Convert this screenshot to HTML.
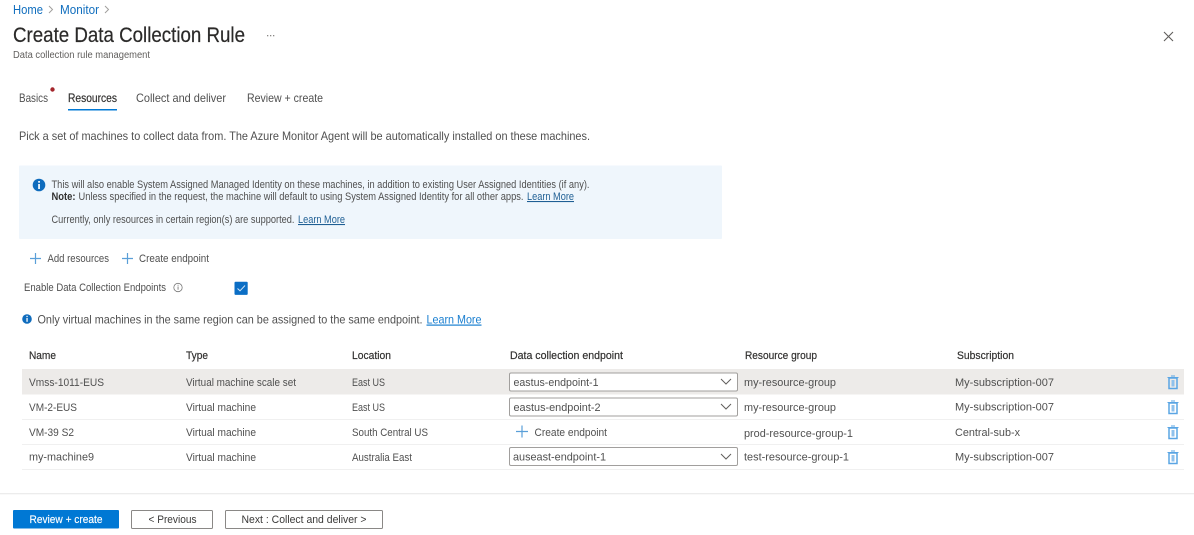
<!DOCTYPE html>
<html><head><meta charset="utf-8"><title>Create Data Collection Rule</title>
<style>
html,body{margin:0;padding:0;background:#fff;width:1194px;height:535px;overflow:hidden}
svg{display:block;font-family:"Liberation Sans",sans-serif;filter:blur(.3px)}
text{fill:#505050;font-size:12px}
.d{fill:#3b3a39}
.h{fill:#323130;stroke:#323130;stroke-width:.2px}
.l{fill:#106ebe}
.s{font-size:10.8px}
.m{font-size:11.4px}
.plus{stroke:#5a9fd8;stroke-width:1.2;fill:none}
.sel{fill:#fff;stroke:#a19f9d;stroke-width:1}
.chev{fill:none;stroke:#605e5c;stroke-width:1}
.tr{fill:none;stroke:#5aa5e4;stroke-width:1.5}
.line{stroke:#f0f0f0;stroke-width:1}
</style></head><body>
<svg width="1194" height="535" viewBox="0 0 1194 535" xmlns="http://www.w3.org/2000/svg">
<!-- breadcrumb -->
<text x="13" y="14" class="l" style="font-size:12.500px" textLength="30" lengthAdjust="spacingAndGlyphs">Home</text>
<path d="M49 6l3.500 3.500L49 13" fill="none" stroke="#a19f9d"/>
<text x="60" y="14" class="l" style="font-size:12.500px" textLength="39" lengthAdjust="spacingAndGlyphs">Monitor</text>
<path d="M105 6l3.500 3.500L105 13" fill="none" stroke="#a19f9d"/>
<!-- title -->
<text x="13" y="42" style="font-size:21px;fill:#2b2a29;stroke:#2b2a29;stroke-width:.2px" textLength="232" lengthAdjust="spacingAndGlyphs">Create Data Collection Rule</text>
<g fill="#8a8886"><rect x="267" y="35" width="1.300" height="1.300"/><rect x="270" y="35" width="1.300" height="1.300"/><rect x="273" y="35" width="1.300" height="1.300"/></g>
<text x="13" y="58" style="font-size:10px;fill:#605e5c" textLength="137" lengthAdjust="spacingAndGlyphs">Data collection rule management</text>
<path d="M1164 32l9 9M1173 32l-9 9" stroke="#605e5c" stroke-width="1.100" fill="none"/>
<!-- tabs -->
<text x="19" y="102" textLength="29" lengthAdjust="spacingAndGlyphs">Basics</text>
<circle cx="52.500" cy="89.500" r="2.200" fill="#a4262c"/>
<text x="68" y="102" class="h" textLength="49" lengthAdjust="spacingAndGlyphs">Resources</text>
<rect x="68" y="109" width="49" height="1.500" fill="#0078d4"/>
<text x="136" y="102" textLength="90" lengthAdjust="spacingAndGlyphs">Collect and deliver</text>
<text x="247" y="102" textLength="76" lengthAdjust="spacingAndGlyphs">Review + create</text>
<text x="19" y="140" textLength="571" lengthAdjust="spacingAndGlyphs">Pick a set of machines to collect data from. The Azure Monitor Agent will be automatically installed on these machines.</text>
<!-- info box -->
<rect x="19" y="165.500" width="703" height="73.500" rx="1" fill="#eff6fc"/>
<circle cx="39" cy="185" r="6.300" fill="#0f6cbd"/>
<rect x="38.200" y="184" width="1.700" height="5" fill="#fff"/><rect x="38.200" y="181" width="1.700" height="1.700" fill="#fff"/>
<text x="51.500" y="188" class="s" textLength="538" lengthAdjust="spacingAndGlyphs">This will also enable System Assigned Managed Identity on these machines, in addition to existing User Assigned Identities (if any).</text>
<text x="51.500" y="200" class="s" style="font-weight:bold;fill:#323130" textLength="24" lengthAdjust="spacingAndGlyphs">Note:</text>
<text x="78.500" y="200" class="s" textLength="445" lengthAdjust="spacingAndGlyphs">Unless specified in the request, the machine will default to using System Assigned Identity for all other apps.</text>
<text x="527" y="200" class="s" style="fill:#1f5f94" text-decoration="underline" textLength="47" lengthAdjust="spacingAndGlyphs">Learn More</text>
<text x="51.500" y="223" class="s" textLength="243" lengthAdjust="spacingAndGlyphs">Currently, only resources in certain region(s) are supported.</text>
<text x="298" y="223" class="s" style="fill:#1f5f94" text-decoration="underline" textLength="47" lengthAdjust="spacingAndGlyphs">Learn More</text>
<!-- toolbar -->
<path class="plus" d="M30 258.500h11M35.500 253v11M122 258.500h11M127.500 253v11"/>
<text x="47.500" y="262" class="m" textLength="61.500" lengthAdjust="spacingAndGlyphs">Add resources</text>
<text x="139" y="262" class="m" textLength="70" lengthAdjust="spacingAndGlyphs">Create endpoint</text>
<text x="24" y="291" class="m" textLength="142" lengthAdjust="spacingAndGlyphs">Enable Data Collection Endpoints</text>
<circle cx="178" cy="287.500" r="4.200" fill="none" stroke="#7a7a7a" stroke-width=".8"/>
<rect x="177.600" y="286.500" width=".9" height="3.200" fill="#7a7a7a"/><rect x="177.600" y="284.800" width=".9" height=".9" fill="#7a7a7a"/>
<rect x="234.500" y="281.700" width="13.200" height="13.200" rx="1" fill="#0b6ec5"/>
<path d="M237.500 288.500l2.500 2.300 5-5.300" fill="none" stroke="#cfe4f7" stroke-width="1"/>
<circle cx="27" cy="319" r="4.800" fill="#0f6cbd"/>
<rect x="26.400" y="318" width="1.300" height="3.800" fill="#fff"/><rect x="26.400" y="315.800" width="1.300" height="1.300" fill="#fff"/>
<text x="37.500" y="323.500" textLength="385" lengthAdjust="spacingAndGlyphs">Only virtual machines in the same region can be assigned to the same endpoint.</text>
<text x="426.500" y="323.500" style="fill:#1a7fd0" text-decoration="underline" textLength="55" lengthAdjust="spacingAndGlyphs">Learn More</text>
<!-- table header -->
<text x="29" y="359" class="h m" textLength="27" lengthAdjust="spacingAndGlyphs">Name</text>
<text x="186" y="359" class="h m" textLength="22" lengthAdjust="spacingAndGlyphs">Type</text>
<text x="352" y="359" class="h m" textLength="39" lengthAdjust="spacingAndGlyphs">Location</text>
<text x="510" y="359" class="h m" textLength="113" lengthAdjust="spacingAndGlyphs">Data collection endpoint</text>
<text x="745" y="359" class="h m" textLength="72" lengthAdjust="spacingAndGlyphs">Resource group</text>
<text x="957" y="359" class="h m" textLength="57" lengthAdjust="spacingAndGlyphs">Subscription</text>
<rect x="22" y="369" width="1162" height="25.500" fill="#edebe9"/>
<path class="line" d="M22 419.500h1162M22 444.500h1162M22 469.500h1162"/>
<!-- rows -->
<text x="29" y="386" class="m" textLength="75" lengthAdjust="spacingAndGlyphs">Vmss-1011-EUS</text>
<text x="186" y="386" class="m" textLength="110" lengthAdjust="spacingAndGlyphs">Virtual machine scale set</text>
<text x="352" y="386" class="m" textLength="33" lengthAdjust="spacingAndGlyphs">East US</text>
<text x="744" y="386" class="m" textLength="92" lengthAdjust="spacingAndGlyphs">my-resource-group</text>
<text x="955" y="386" class="m" textLength="99" lengthAdjust="spacingAndGlyphs">My-subscription-007</text>

<text x="29" y="411" class="m" textLength="48" lengthAdjust="spacingAndGlyphs">VM-2-EUS</text>
<text x="186" y="411" class="m" textLength="70" lengthAdjust="spacingAndGlyphs">Virtual machine</text>
<text x="352" y="411" class="m" textLength="33" lengthAdjust="spacingAndGlyphs">East US</text>
<text x="744" y="411" class="m" textLength="92" lengthAdjust="spacingAndGlyphs">my-resource-group</text>
<text x="955" y="410.500" class="m" textLength="99" lengthAdjust="spacingAndGlyphs">My-subscription-007</text>

<text x="29" y="436" class="m" textLength="45" lengthAdjust="spacingAndGlyphs">VM-39 S2</text>
<text x="186" y="436" class="m" textLength="70" lengthAdjust="spacingAndGlyphs">Virtual machine</text>
<text x="352" y="436" class="m" textLength="76" lengthAdjust="spacingAndGlyphs">South Central US</text>
<text x="744" y="437" class="m" textLength="109" lengthAdjust="spacingAndGlyphs">prod-resource-group-1</text>
<text x="955" y="436" class="m" textLength="65" lengthAdjust="spacingAndGlyphs">Central-sub-x</text>

<text x="29" y="460.500" class="m" textLength="65" lengthAdjust="spacingAndGlyphs">my-machine9</text>
<text x="186" y="461" class="m" textLength="70" lengthAdjust="spacingAndGlyphs">Virtual machine</text>
<text x="352" y="461" class="m" textLength="60" lengthAdjust="spacingAndGlyphs">Australia East</text>
<text x="744" y="460.500" class="m" textLength="105" lengthAdjust="spacingAndGlyphs">test-resource-group-1</text>
<text x="955" y="460.500" class="m" textLength="99" lengthAdjust="spacingAndGlyphs">My-subscription-007</text>
<!-- selects -->
<rect class="sel" x="509.500" y="373" width="228" height="18" rx="1.500"/>
<text x="513.500" y="386" class="m" textLength="85" lengthAdjust="spacingAndGlyphs">eastus-endpoint-1</text>
<path class="chev" d="M721 379l5 5 5-5"/>
<rect class="sel" x="509.500" y="398" width="228" height="18" rx="1.500"/>
<text x="513.500" y="411" class="m" textLength="87" lengthAdjust="spacingAndGlyphs">eastus-endpoint-2</text>
<path class="chev" d="M721 404l5 5 5-5"/>
<path class="plus" d="M516 431.500h12M522 425.500v12"/>
<text x="534.500" y="436" class="m" textLength="72.500" lengthAdjust="spacingAndGlyphs">Create endpoint</text>
<rect class="sel" x="509.500" y="447.500" width="228" height="18" rx="1.500"/>
<text x="513" y="460.500" class="m" textLength="93" lengthAdjust="spacingAndGlyphs">auseast-endpoint-1</text>
<path class="chev" d="M721 454l5 5 5-5"/>
<!-- trash icons -->
<g id="t"><path class="tr" d="M1169 378h8v10.500h-8z"/><path d="M1167.500 377.500h11M1171 376h4" stroke="#5aa5e4" stroke-width="1" fill="none"/><rect x="1171.500" y="380" width="3" height="6.500" fill="#8fc1ec"/></g>
<use href="#t" y="25"/><use href="#t" y="50"/><use href="#t" y="75"/>
<!-- footer -->
<rect x="0" y="493" width="1194" height="1.300" fill="#ececec"/>
<rect x="13" y="510" width="106" height="18.500" rx="1" fill="#0078d4"/>
<text x="29.500" y="523" class="m" style="fill:#fff;stroke:#fff;stroke-width:.15px" textLength="73" lengthAdjust="spacingAndGlyphs">Review + create</text>
<rect x="131.500" y="510.500" width="81" height="18" rx="1" fill="#fff" stroke="#8a8886"/>
<text x="148.500" y="523" class="d m" textLength="48" lengthAdjust="spacingAndGlyphs">&lt; Previous</text>
<rect x="225.500" y="510.500" width="157" height="18" rx="1" fill="#fff" stroke="#8a8886"/>
<text x="241.500" y="523" class="d m" textLength="125" lengthAdjust="spacingAndGlyphs">Next : Collect and deliver &gt;</text>
</svg>
</body></html>
